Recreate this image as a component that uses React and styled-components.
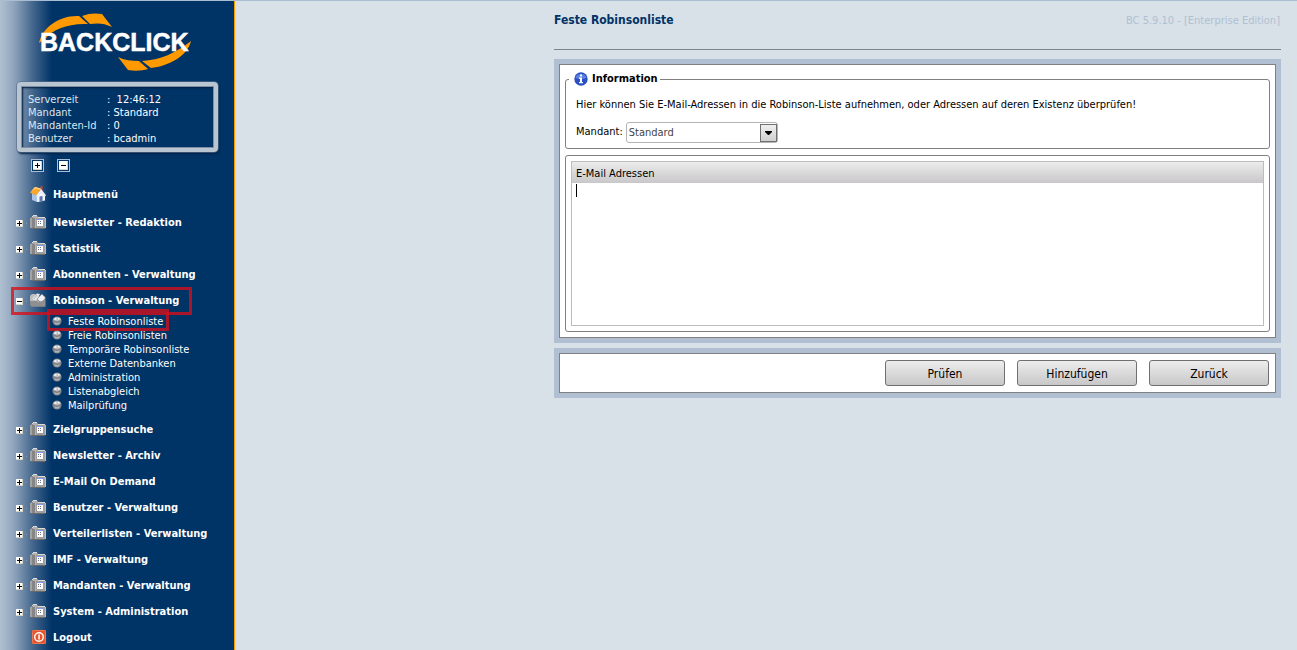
import React from 'react';
import styled, { createGlobalStyle, css } from 'styled-components';

const GlobalStyle = createGlobalStyle`
  * {
    box-sizing: border-box;
  }
  body {
    margin: 0;
    background: #d8e0e8;
    color: #000;
    font-family: 'DejaVu Sans Condensed', Tahoma, 'DejaVu Sans', sans-serif;
    font-size: 11px;
    line-height: 14px;
  }
`;

const Page = styled.div`
  display: flex;
  min-height: 100vh;
  border-top: 1px solid #a9bdd3;
`;

const Sidebar = styled.aside`
  flex: none;
  width: 235px;
  border-right: 1px solid #ff9900;
  background: linear-gradient(to right, #b0c0d2 0, #8fa4bc 14px, #3f638b 34px, #003366 52px);
  color: #fff;
`;

const LogoLink = styled.a`
  display: block;
  height: 81px;
  padding: 10px 0 0 38px;
`;

const ServerBox = styled.dl`
  display: grid;
  grid-template-columns: 79px 1fr;
  width: 201px;
  height: 70px;
  margin: 0 0 0 17px;
  padding: 7px;
  border: 4px solid #b9c5d1;
  border-radius: 4px;
  box-shadow:
    inset 0 0 0 1px #7d90a6,
    inset 1px 1px 2px 1px #001d3f,
    0 0 0 1px rgba(90, 112, 138, 0.6),
    1px 2px 2px #00234a;
  line-height: 13px;

  dt {
    color: #dfe6ee;
  }
  dd {
    margin: 0;
    white-space: pre;
  }
`;

const TreeTools = styled.div`
  display: flex;
  gap: 13px;
  padding: 7px 0 9px 31px;
`;

const ToolButton = styled.button`
  display: grid;
  place-items: center;
  width: 13px;
  height: 13px;
  padding: 0;
  border: 1px solid #a9bdd3;
  background: #003366;
  cursor: pointer;
`;

const Menu = styled.ul`
  margin: 0;
  padding: 0;
  list-style: none;
`;

const MenuRow = styled.div`
  position: relative;
  display: flex;
  align-items: center;
  height: 26px;
  padding-left: ${({ $plain }) => ($plain ? '30px' : '16px')};
  margin-bottom: ${({ $gap }) => ($gap ? '2px' : '0')};
`;

const Toggle = styled.button`
  display: block;
  width: 14px;
  height: 7px;
  margin-top: 3px;
  padding: 0;
  border: 0;
  background: none;
  cursor: pointer;

  svg {
    display: block;
  }
`;

const MenuLink = styled.a`
  display: flex;
  align-items: flex-end;
  gap: 7px;
  color: #fff;
  font-weight: 700;
  text-decoration: none;
  white-space: nowrap;
`;

const SubMenu = styled.ul`
  margin: 0;
  padding: 2px 0 3px 52px;
  list-style: none;
`;

const SubItem = styled.li`
  position: relative;
  width: max-content;
`;

const SubLink = styled.a`
  display: flex;
  align-items: center;
  gap: 6px;
  color: #fff;
  text-decoration: none;
  white-space: nowrap;
`;

const frame = css`
  content: '';
  position: absolute;
  border: 3px solid rgba(216, 14, 24, 0.78);
  pointer-events: none;
`;

const MarkedRow = styled(MenuRow)`
  &::after {
    ${frame}
    inset: 0 42px -2px 11px;
  }
`;

const MarkedSubItem = styled(SubItem)`
  &::after {
    ${frame}
    inset: -6px -6px -2px -5px;
  }
`;

const Main = styled.main`
  flex: 1;
  min-width: 0;
  padding: 0 16px 0 319px;
`;

const Header = styled.header`
  display: flex;
  justify-content: space-between;
  height: 49px;
  padding-top: 12px;
  border-bottom: 1px solid #7b8590;
`;

const Title = styled.h1`
  margin: 0;
  color: #003366;
  font-size: 12px;
  line-height: 15px;
`;

const Version = styled.span`
  padding: 1px 1px 0 0;
  color: #b0c0d2;
`;

const Panel = styled.section`
  border: 5px solid #b0c0d2;
  margin-top: ${({ $first }) => ($first ? '9px' : '5px')};
`;

const PanelBody = styled.div`
  display: flex;
  flex-direction: column;
  gap: 6px;
  padding: 7px 5px 5px;
  border: 1px solid #808080;
  background: #fff;
`;

const ActionBar = styled(PanelBody)`
  flex-direction: row;
  justify-content: flex-end;
  gap: 12px;
  padding: 6px;
`;

const Group = styled.fieldset`
  min-width: 0;
  margin: 0;
  padding: 12px 10px 5px;
  border: 1px solid #808080;
  border-radius: 3px;
`;

const ListGroup = styled.div`
  padding: 5px;
  border: 1px solid #808080;
  border-radius: 3px;
`;

const Legend = styled.legend`
  display: flex;
  align-items: center;
  gap: 4px;
  margin-left: -7px;
  padding: 0 2px 0 5px;
  font-weight: 700;
`;

const Hint = styled.p`
  margin: 0 0 10px;
`;

const Field = styled.div`
  display: flex;
  gap: 3px;

  label {
    padding-top: 3px;
  }
`;

const SelectWrap = styled.div`
  position: relative;
  width: 152px;

  svg {
    position: absolute;
    top: 2px;
    right: 1px;
    pointer-events: none;
  }
`;

const Select = styled.select`
  display: block;
  width: 100%;
  height: 21px;
  padding: 1px 20px 0 2px;
  appearance: none;
  border: 1px solid #b4b4b4;
  border-radius: 3px;
  background: #fff;
  color: #444;
  font: inherit;
`;

const AddressBox = styled.div`
  position: relative;
  border: 1px solid #bdbdbd;
`;

const AddressLabel = styled.label`
  display: block;
  padding: 5px 4px 2px;
  background: linear-gradient(#ececec, #c9c7c9);
`;

const AddressArea = styled.textarea`
  display: block;
  width: 100%;
  height: 142px;
  padding: 2px 4px;
  border: 0;
  outline: none;
  resize: none;
  background: #fff;
  font: inherit;
  caret-color: transparent;
`;

const Caret = styled.span`
  position: absolute;
  top: 22px;
  left: 4px;
  width: 1px;
  height: 13px;
  background: #000;
`;

const Button = styled.button`
  width: 120px;
  height: 26px;
  padding: 1px 0 0;
  border: 1px solid #707070;
  border-radius: 3px;
  background: linear-gradient(#ededed, #c9c7c9);
  color: #000;
  font: inherit;
  font-size: 12px;
  cursor: pointer;
`;

const Logo = () => (
  <svg width="156" height="62" viewBox="38 11 156 62" role="img" aria-label="BACKCLICK">
    <path d="M39 43C43 26 61 15 79 16L88 24C68 23 52 30 46 38Z" fill="#ff9900" />
    <path d="M82 16C89 13 96 13 102 14L112 27C104 23 98 23 90 24Z" fill="#ff9900" />
    <path d="M118 57C124 60 132 61 139 61L148 69C142 71 134 71 128 70Z" fill="#ff9900" />
    <path d="M142 61C160 60 176 53 191 41C187 57 168 66 151 68Z" fill="#ff9900" />
    <text
      x="40"
      y="51"
      fill="#fff"
      stroke="#fff"
      strokeWidth="0.5"
      fontFamily="'Liberation Sans', Arial, sans-serif"
      fontSize="25"
      fontWeight="700"
    >
      BACKCLICK
    </text>
  </svg>
);

const SignIcon = ({ open }) => (
  <svg width="7" height="7" viewBox="0 0 7 7" shapeRendering="crispEdges">
    <rect width="7" height="7" fill="#d5d2c6" />
    <rect width="6" height="6" fill="#fff" />
    <path d={open ? 'M1 3h5v1H1z' : 'M1 3h2V1h1v2h2v1H4v2H3V4H1z'} fill="#000" />
  </svg>
);

const ToolIcon = ({ open }) => (
  <svg width="9" height="9" shapeRendering="crispEdges">
    <rect width="9" height="9" fill="#d5d2c6" />
    <rect width="8" height="8" fill="#fff" />
    <path d={open ? 'M2 4h5v1H2z' : 'M2 4h2V2h1v2h2v1H5v2H4V5H2z'} fill="#000" />
  </svg>
);

const FolderIcon = () => (
  <svg width="16" height="16" viewBox="0 0 16 16" shapeRendering="crispEdges">
    <path d="M0 4h1V3h1V2h1V1h4v1h1v1h7v12H1v-1H0z" fill="#8f8f8f" />
    <path d="M0 4h2v10H0z" fill="#a4a4a4" />
    <path d="M3 1h4v1H3zM2 2h1v1H2zM8 3h7v1H8z" fill="#dcdcdc" />
    <path d="M3 2h4v1h1v1H3z" fill="#b0b0b0" />
    <path d="M2 4h3v10H2z" fill="#858585" />
    <path d="M5 4h10v10H5z" fill="#9e9e9e" />
    <path d="M5 4h1v10H5z" fill="#b4b4b4" />
    <path d="M15 4h1v10h-1z" fill="#bababa" />
    <path d="M7 5h6v7H7z" fill="#fff" />
    <path d="M7 5h6v1H7z" fill="#7d9df2" />
    <path d="M8 7h1v1H8zM10 7h1v1h-1zM8 9h1v1H8zM10 9h1v1h-1z" fill="#6f7486" />
    <path d="M1 14h14v1H1z" fill="#6a6a6a" />
  </svg>
);

const OpenFolderIcon = () => (
  <svg width="16" height="16" viewBox="0 0 16 16">
    <path d="M0 4L2 2h3l1 2h9v10.500H1L0 13z" fill="#8a8a8a" />
    <path d="M0 4L2 2h3l1.500 1.500L1 9H0z" fill="#bdbdbd" />
    <path d="M2 7l5-5.500 3 .5-4 7z" fill="#e9e9e9" />
    <path d="M7 7l5-5 3.500 4-4 5z" fill="#eef2f6" stroke="#7a7a7a" strokeWidth="0.5" />
    <path d="M4 7l3-4" stroke="#8fa3bd" strokeWidth="0.8" />
    <path d="M1 8.500h6l2 1.500L15.500 7.500v7H1z" fill="#8f8f8f" />
    <path d="M1 8.500h6l2 1.500" fill="none" stroke="#c9c9c9" strokeWidth="0.8" />
  </svg>
);

const HomeIcon = () => (
  <svg width="16" height="16" viewBox="0 0 16 16">
    <path d="M10.500 0h2v5h-2z" fill="#c8452f" />
    <path d="M2 7l5 3v6l-5-2z" fill="#a9c4e8" />
    <path d="M7 9l4-4.500 4 4.500v5.500L8 16H7z" fill="#f2f6fc" />
    <path d="M9.500 10.500l3-.5v5l-3 .5z" fill="#5b76b0" />
    <path d="M0 6.500L5 1l6 1.500L6.500 9.500z" fill="#ffa62b" />
    <path d="M1 5.500L5 1l6 1.500-1 1L5.500 2.500z" fill="#ffd28a" />
    <path d="M6 10l5-7 5 6.500-1 .5-4-4.500L7 11z" fill="#fff" stroke="#b9c7dc" strokeWidth="0.4" />
  </svg>
);

const LogoutIcon = () => (
  <svg width="16" height="16" viewBox="0 0 16 16">
    <rect x="2" y="1" width="14" height="14" rx="1" fill="#e4572e" />
    <rect x="2.500" y="1.500" width="13" height="13" rx="1" fill="none" stroke="#ec7652" />
    <circle cx="9" cy="8" r="4.300" fill="none" stroke="#fff" strokeWidth="1.400" />
    <path d="M8.300 5.500h1.500v5H8.300z" fill="#fff" />
  </svg>
);

const BallIcon = () => (
  <svg width="10" height="12" viewBox="0 0 10 12">
    <circle cx="5" cy="5" r="4.600" fill="#7e8186" />
    <path d="M1 4a4.200 4.200 0 0 1 8 0L5 5.500z" fill="#b9bcc1" />
    <path d="M2.500 2.200h2v1.600h-2zM6 2h1.500v1.500H6z" fill="#fff" />
    <path d="M2 6l3 1.300L8 6 6.500 8.500h-3z" fill="#b4b7bb" />
  </svg>
);

const InfoIcon = () => (
  <svg width="14" height="14" viewBox="0 0 14 14">
    <circle cx="7" cy="7" r="6.700" fill="#2a50c4" />
    <path d="M1.500 6a5.600 5 0 0 1 11 0Q7 8 1.500 6z" fill="#5f82e0" />
    <path d="M6 2.500h2v2H6zM5 5.500h3v4.500h1v1.200H5V10h1V6.700H5z" fill="#fff" />
  </svg>
);

const DropIcon = () => (
  <svg width="17" height="18" viewBox="0 0 17 18">
    <defs>
      <linearGradient id="drop" x1="0" y1="0" x2="0" y2="1">
        <stop offset="0" stopColor="#f0f0f0" />
        <stop offset="1" stopColor="#cfcfcf" />
      </linearGradient>
    </defs>
    <rect x="0.500" y="0.500" width="16" height="17" fill="url(#drop)" stroke="#707070" />
    <path d="M5 7h7v1l-3 3H8L5 8z" fill="#000" />
  </svg>
);

const robinsonItems = [
  'Feste Robinsonliste',
  'Freie Robinsonlisten',
  'Temporäre Robinsonliste',
  'Externe Datenbanken',
  'Administration',
  'Listenabgleich',
  'Mailprüfung',
];

const menu = [
  { title: 'Newsletter - Redaktion' },
  { title: 'Statistik' },
  { title: 'Abonnenten - Verwaltung' },
  { title: 'Robinson - Verwaltung', items: robinsonItems },
  { title: 'Zielgruppensuche' },
  { title: 'Newsletter - Archiv' },
  { title: 'E-Mail On Demand' },
  { title: 'Benutzer - Verwaltung' },
  { title: 'Verteilerlisten - Verwaltung' },
  { title: 'IMF - Verwaltung' },
  { title: 'Mandanten - Verwaltung' },
  { title: 'System - Administration' },
];

const ToggleIcon = ({ open }) => (
  <svg width="11" height="7" shapeRendering="crispEdges">
    <SignIcon open={open} />
    <rect x="10" y="3" width="1" height="1" fill="#8a97a6" />
  </svg>
);

const MenuGroup = ({ title, items }) => {
  const Row = items ? MarkedRow : MenuRow;

  return (
    <li>
      <Row>
        <Toggle type="button" aria-label={title} aria-expanded={!!items}>
          <ToggleIcon open={!!items} />
        </Toggle>
        <MenuLink href="#">
          {items ? <OpenFolderIcon /> : <FolderIcon />}
          {title}
        </MenuLink>
      </Row>
      {items && (
        <SubMenu>
          {items.map((item, i) => {
            const Item = i === 0 ? MarkedSubItem : SubItem;
            return (
              <Item key={item}>
                <SubLink href="#">
                  <BallIcon />
                  {item}
                </SubLink>
              </Item>
            );
          })}
        </SubMenu>
      )}
    </li>
  );
};

const App = () => {
  return (
    <>
      <GlobalStyle />
      <Page>
        <Sidebar>
          <LogoLink href="#">
            <Logo />
          </LogoLink>
          <ServerBox>
            <dt>Serverzeit</dt>
            <dd>:  12:46:12</dd>
            <dt>Mandant</dt>
            <dd>: Standard</dd>
            <dt>Mandanten-Id</dt>
            <dd>: 0</dd>
            <dt>Benutzer</dt>
            <dd>: bcadmin</dd>
          </ServerBox>
          <TreeTools>
            <ToolButton type="button" aria-label="Alle öffnen">
              <ToolIcon />
            </ToolButton>
            <ToolButton type="button" aria-label="Alle schließen">
              <ToolIcon open />
            </ToolButton>
          </TreeTools>
          <Menu>
            <li>
              <MenuRow $plain $gap>
                <MenuLink href="#">
                  <HomeIcon />
                  Hauptmenü
                </MenuLink>
              </MenuRow>
            </li>
            {menu.map((group) => (
              <MenuGroup key={group.title} {...group} />
            ))}
            <li>
              <MenuRow $plain>
                <MenuLink href="#">
                  <LogoutIcon />
                  Logout
                </MenuLink>
              </MenuRow>
            </li>
          </Menu>
        </Sidebar>
        <Main>
          <Header>
            <Title>Feste Robinsonliste</Title>
            <Version>BC 5.9.10 - [Enterprise Edition]</Version>
          </Header>
          <Panel $first>
            <PanelBody>
              <Group>
                <Legend>
                  <InfoIcon />
                  Information
                </Legend>
                <Hint>
                  Hier können Sie E-Mail-Adressen in die Robinson-Liste aufnehmen, oder Adressen auf
                  deren Existenz überprüfen!
                </Hint>
                <Field>
                  <label htmlFor="mandant">Mandant:</label>
                  <SelectWrap>
                    <Select id="mandant" defaultValue="Standard">
                      <option>Standard</option>
                    </Select>
                    <DropIcon />
                  </SelectWrap>
                </Field>
              </Group>
              <ListGroup>
                <AddressBox>
                  <AddressLabel htmlFor="adressen">E-Mail Adressen</AddressLabel>
                  <AddressArea id="adressen" />
                  <Caret />
                </AddressBox>
              </ListGroup>
            </PanelBody>
          </Panel>
          <Panel>
            <ActionBar>
              <Button type="button">Prüfen</Button>
              <Button type="button">Hinzufügen</Button>
              <Button type="button">Zurück</Button>
            </ActionBar>
          </Panel>
        </Main>
      </Page>
    </>
  );
};

export default App;
